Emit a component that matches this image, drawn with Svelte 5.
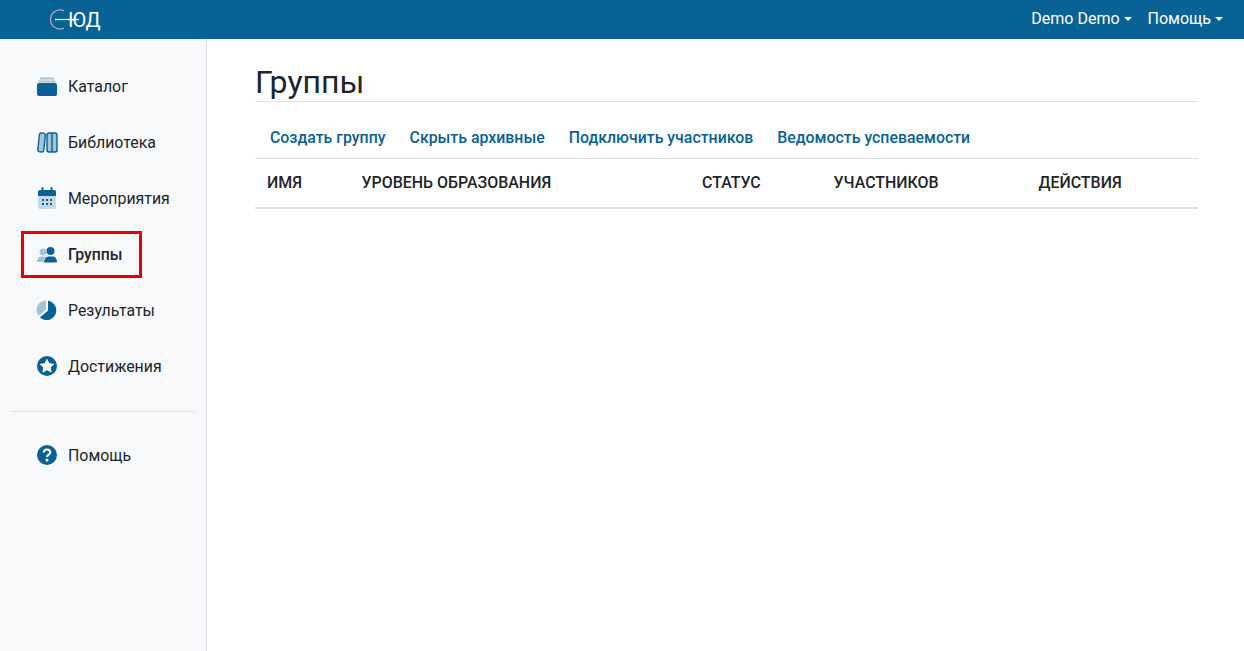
<script lang="ts">
    const menu = [
        { id: "catalog", label: "Каталог" },
        { id: "library", label: "Библиотека" },
        { id: "events", label: "Мероприятия" },
        { id: "groups", label: "Группы", active: true },
        { id: "results", label: "Результаты" },
        { id: "awards", label: "Достижения" },
    ];
    const actions = ["Создать группу", "Скрыть архивные", "Подключить участников", "Ведомость успеваемости"];
    const columns = ["Имя", "Уровень образования", "Статус", "Участников", "Действия"];
</script>

{#snippet icon(id: string)}
    <svg class="icon" width="22" height="22" viewBox="0 0 22 22">
        {#if id === "catalog"}
            <path d="M4.500 2.500h13l1 2h-15z" fill="#a3c3d8" />
            <path d="M3 5.500h16l1 2H2z" fill="#a3c3d8" />
            <rect x="1" y="8" width="20" height="13" rx="2" fill="#086295" />
        {:else if id === "library"}
            <rect x="2.600" y="2" width="6" height="19" rx="2" transform="rotate(6 5.600 11.500)" fill="#a3c3d8" stroke="#086295" stroke-width="1.400" />
            <rect x="11" y="2" width="10" height="19" rx="2" fill="#a3c3d8" stroke="#086295" stroke-width="1.400" />
            <path d="M16 2v19" stroke="#086295" stroke-width="1.400" />
        {:else if id === "events"}
            <rect x="2" y="3" width="18" height="19" rx="2" fill="#c5d9e6" />
            <path d="M2 9V5a2 2 0 0 1 2-2h14a2 2 0 0 1 2 2v4z" fill="#086295" />
            <path d="M6.500 1v4M15.500 1v4" stroke="#086295" stroke-width="2" stroke-linecap="round" />
            <path d="M6 13h2M10 13h2M14 13h2M6 17h2M10 17h2M14 17h2" stroke="#086295" stroke-width="2" />
        {:else if id === "groups"}
            <circle cx="7" cy="8" r="3.400" fill="#a3c3d8" />
            <path d="M1 18c0-3.500 2-5.500 5-5.500 2 0 3 .5 3.500 1-1.500 1-2 3-2 4.500z" fill="#a3c3d8" />
            <circle cx="14.500" cy="7" r="4" fill="#086295" />
            <path d="M8 18.500c0-4 2.500-6 4.500-6h4c2.500 0 4.500 2 4.500 6z" fill="#086295" />
        {:else if id === "results"}
            <path d="M10 1.500A9.500 9.500 0 0 0 2.600 16.800L10 10.500z" fill="#a3c3d8" />
            <circle cx="6" cy="8" r=".6" fill="#6f9fbe" />
            <circle cx="8" cy="5" r=".6" fill="#6f9fbe" />
            <circle cx="5" cy="12" r=".6" fill="#6f9fbe" />
            <path d="M12 1.800A9.700 9.700 0 1 1 4 18.500L12 11.500z" fill="#086295" />
        {:else if id === "awards"}
            <circle cx="11" cy="11" r="10" fill="#086295" />
            <path d="M11 4.500l2 4.200 4.600.6-3.400 3.200.9 4.500-4.100-2.300-4.100 2.300.9-4.500-3.400-3.200 4.600-.6z" fill="#fff" stroke="#fff" stroke-linejoin="round" />
        {:else}
            <circle cx="11" cy="11" r="10" fill="#086295" />
            <path d="M7.800 8.500c0-1.900 1.400-3 3.200-3s3.200 1.100 3.200 2.800c0 2.400-3.200 2.300-3.200 4.700" fill="none" stroke="#fff" stroke-width="2.200" />
            <circle cx="11" cy="16" r="1.500" fill="#fff" />
        {/if}
    </svg>
{/snippet}

<header class="navbar">
    <a class="brand" href="#top">
        <svg width="30" height="22" viewBox="0 0 30 22">
            <path d="M14 1.900A9.500 9.500 0 1 0 14 19.100" fill="none" stroke="#b9a6b3" stroke-width="1.300" />
            <path d="M5 10.500h24" stroke="#fff" stroke-width="1.200" />
        </svg>
        <span>ЮД</span>
    </a>
    <nav class="user-menu">
        <a class="caret" href="#top">Demo Demo</a>
        <a class="caret" href="#top">Помощь</a>
    </nav>
</header>

<div class="page">
    <aside class="sidebar">
        <ul class="menu">
            {#each menu as item}
                <li>
                    <a class="item" class:active={item.active} href="#top">
                        {@render icon(item.id)}
                        <span>{item.label}</span>
                    </a>
                </li>
            {/each}
        </ul>
        <hr />
        <a class="item" href="#top">
            {@render icon("help")}
            <span>Помощь</span>
        </a>
    </aside>

    <main class="content">
        <h1>Группы</h1>
        <div class="actions">
            {#each actions as action}
                <a href="#top">{action}</a>
            {/each}
        </div>
        <table>
            <thead>
                <tr>
                    {#each columns as column}
                        <th>{column}</th>
                    {/each}
                </tr>
            </thead>
        </table>
    </main>
</div>

<style>
    :global(body) {
        margin: 0;
        font-family: Roboto, "Liberation Sans", sans-serif;
        color: #212529;
        background: #fff;
    }

    a {
        text-decoration: none;
    }

    .navbar {
        height: 39px;
        background: #086295;
        display: flex;
        align-items: center;
        justify-content: space-between;
        padding: 0 21px 0 50px;
    }

    .brand {
        display: flex;
        align-items: center;
        color: #fff;
        font-size: 20px;
        height: 39px;
    }

    .brand svg {
        margin-right: -12px;
        position: relative;
        z-index: 1;
    }

    .user-menu {
        display: flex;
        gap: 16px;
        font-size: 16px;
        padding-bottom: 2px;
    }

    .user-menu a {
        color: #fff;
    }

    .caret::after {
        content: "";
        display: inline-block;
        margin-left: 4px;
        vertical-align: 3px;
        border-top: 4px solid #fff;
        border-left: 4.5px solid transparent;
        border-right: 4.5px solid transparent;
    }

    .page {
        display: flex;
        height: 612px;
    }

    .sidebar {
        box-sizing: border-box;
        width: 207px;
        flex: none;
        background: #f8f9fa;
        border-right: 1px solid #dee2e6;
        padding: 19px 11px 0;
    }

    .menu {
        list-style: none;
        margin: 0;
        padding: 0;
    }

    .item {
        box-sizing: border-box;
        width: 120px;
        height: 56px;
        display: flex;
        align-items: center;
        gap: 10px;
        padding-left: 25px;
        color: #212529;
        font-size: 15.9px;
    }

    .icon {
        flex: none;
    }

    .item.active {
        width: 121px;
        height: 47px;
        margin: 5px 0 4px 10px;
        padding-left: 12px;
        border: 3px solid #ea0000;
        font-size: 15.75px;
        font-weight: 500;
    }

    hr {
        border: 0;
        border-top: 1px solid #dee2e6;
        margin: 17px 0 15px;
        width: 184px;
    }

    .content {
        flex: 1;
        min-width: 0;
        padding: 0 46px 0 48px;
    }

    h1 {
        margin: 24px 0 0;
        height: 38px;
        font-size: 32px;
        font-weight: 400;
        line-height: 38px;
        border-bottom: 1px solid #dee2e6;
    }

    .actions {
        box-sizing: border-box;
        display: flex;
        gap: 24px;
        height: 56px;
        align-items: center;
        padding: 14px 15px 0;
        font-size: 15.88px;
        font-weight: 500;
    }

    .actions a {
        color: #086295;
    }

    table {
        width: 943px;
        border-collapse: collapse;
        table-layout: fixed;
    }

    th {
        box-sizing: border-box;
        height: 49px;
        padding: 0 12px;
        text-align: left;
        font-size: 15.95px;
        font-weight: 500;
        text-transform: uppercase;
        border-top: 1px solid #dee2e6;
        border-bottom: 2px solid #dee2e6;
    }

    th:nth-child(1) { width: 94.5px; }
    th:nth-child(2) { width: 340.5px; }
    th:nth-child(3) { width: 131.5px; }
    th:nth-child(4) { width: 205px; }
</style>
